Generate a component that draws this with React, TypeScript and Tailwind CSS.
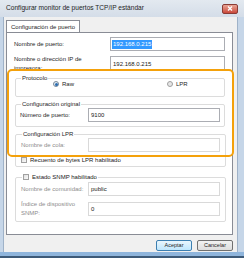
import React from 'react';

function Input({ value, gray, className = '' }: { value?: string; gray?: boolean; className?: string }) {
  return (
    <div className={`h-[14px] border bg-white flex items-center px-[2px] ${gray ? 'border-[#d9d9d9]' : 'border-[#abadb3]'} ${className}`}>
      <span className="text-[#222]">{value}</span>
    </div>
  );
}

function Check({ label }: { label: string }) {
  return (
    <div className="flex items-center gap-[3px] whitespace-nowrap">
      <div className="w-[6px] h-[6px] border border-[#a0a0a0] bg-gradient-to-br from-[#e0e0e0] to-[#fafafa]" />
      <span className="text-[#222]">{label}</span>
    </div>
  );
}

export default function App() {
  return (
    <div className="w-[244px] h-[258px] bg-[#c6d6e8] flex flex-col overflow-hidden font-['Liberation_Sans',sans-serif] text-[6px] leading-none text-[#1e1e1e]">
      {/* title bar */}
      <div className="h-[17px] flex items-center justify-between pl-[6px] pr-[6px] bg-gradient-to-b from-[#e3e9f0] to-[#d4dde8]">
        <span className="text-[6.6px] text-[#1e1e1e]">Configurar monitor de puertos TCP/IP estándar</span>
        <div className="w-[16px] h-[10px] rounded-[2px] border border-[#8a3b35] bg-gradient-to-b from-[#e8a496] to-[#c9473a] flex items-center justify-center">
          <svg width="6" height="5" viewBox="0 0 6 5">
            <path d="M1 0.5 L5 4.5 M5 0.5 L1 4.5" stroke="white" strokeWidth="1.3" />
          </svg>
        </div>
      </div>

      <div className="flex flex-1">
        <div className="w-[4px] border-r border-[#9fb2c8]" />
        <div className="w-[233px] bg-[#f0f0f0] flex flex-col pl-[2px] pr-[4px] pt-[2px]">
          {/* tab */}
          <div className="flex">
            <div className="h-[13px] px-[4px] flex items-center bg-white border border-b-0 border-[#898c95] relative top-[1px]">
              Configuración de puerto
            </div>
          </div>
          <div className="h-[203px] bg-white border border-[#898c95] flex flex-col px-[7px] pt-[4px] relative">
            <div className="flex items-center h-[14px]">
              <span className="w-[96px]">Nombre de puerto:</span>
              <div className="h-[14px] flex-1 border border-[#abadb3] flex items-center px-[1px]">
                <span className="bg-[#3399ff] text-white px-[1px] py-[1.5px]">192.168.0.215</span>
              </div>
            </div>
            <div className="flex items-center mt-[5px] h-[15px]">
              <span className="w-[96px] leading-[9px]">Nombre o dirección IP de<br />impresora:</span>
              <Input value="192.168.0.215" className="flex-1 h-[15px]" />
            </div>

            {/* orange highlight */}
            <div className="absolute left-0 top-[36px] w-[227px] h-[88px] border-2 border-[#f4a10b] rounded-[5px]" />

            <fieldset className="mt-[4px] ml-[1px] mr-0 border border-[#dcdcdc] rounded-[2px] h-[22px] px-[4px] flex">
              <legend className="px-[1px] ml-[1px]">Protocolo</legend>
              <div className="flex items-center w-full h-full">
                <div className="ml-[33px] flex items-center gap-[3px]">
                  <div className="w-[6px] h-[6px] rounded-full border border-[#7a8a99] bg-[#dfe9f2] flex items-center justify-center">
                    <div className="w-[3px] h-[3px] rounded-full bg-[#2b6cb0]" />
                  </div>
                  <span>Raw</span>
                </div>
                <div className="ml-[93px] flex items-center gap-[3px]">
                  <div className="w-[6px] h-[6px] rounded-full border border-[#a0a0a0] bg-[#e6e6e6]" />
                  <span>LPR</span>
                </div>
              </div>
            </fieldset>

            <fieldset className="mt-[4px] ml-[1px] border border-[#dcdcdc] rounded-[2px] h-[26px] px-[4px]">
              <legend className="px-[1px] ml-[1px]">Configuración original</legend>
              <div className="flex items-center mt-[1px]">
                <span className="w-[68px]">Número de puerto:</span>
                <Input value="9100" className="w-[132px]" />
              </div>
            </fieldset>

            <fieldset className="mt-[4px] ml-[1px] border border-[#dcdcdc] rounded-[2px] h-[36px] px-[5px]">
              <legend className="px-[1px] ml-[1px]">Configuración LPR</legend>
              <div className="flex items-center mt-[1px]">
                <span className="w-[67px] text-[#8d8d8d]">Nombre de cola:</span>
                <Input gray className="w-[132px]" />
              </div>
              <div className="mt-[5px]">
                <Check label="Recuento de bytes LPR habilitado" />
              </div>
            </fieldset>

            <fieldset className="mt-[7px] ml-[1px] border border-[#dcdcdc] rounded-[2px] h-[48px] px-[5px]">
              <legend className="px-[1px] ml-[1px]">
                <Check label="Estado SNMP habilitado" />
              </legend>
              <div className="flex items-center mt-[2px]">
                <span className="w-[67px] text-[#8d8d8d] whitespace-nowrap">Nombre de comunidad:</span>
                <Input value="public" gray className="w-[132px]" />
              </div>
              <div className="flex items-center mt-[4px]">
                <span className="w-[67px] text-[#8d8d8d] leading-[9px]">Índice de dispositivo<br />SNMP:</span>
                <Input value="0" gray className="w-[132px]" />
              </div>
            </fieldset>
          </div>

          {/* buttons */}
          <div className="flex justify-end gap-[5px] mt-[5px]">
            <button className="w-[36px] h-[11px] rounded-[2px] border border-[#3c7fb1] bg-gradient-to-b from-[#eaf6fd] to-[#bee6fd] text-[5.5px] text-[#1e1e1e] leading-none">Aceptar</button>
            <button className="w-[36px] h-[11px] rounded-[2px] border border-[#707070] bg-gradient-to-b from-[#f2f2f2] to-[#dddddd] text-[5.5px] text-[#1e1e1e] leading-none">Cancelar</button>
          </div>
        </div>
        <div className="w-[7px] border-l border-[#9fb2c8] bg-[#c6d6e8]" />
      </div>
      <div className="h-[6px] bg-[#8fb5dc] border-b-2 border-[#3d5a78]" />
    </div>
  );
}
